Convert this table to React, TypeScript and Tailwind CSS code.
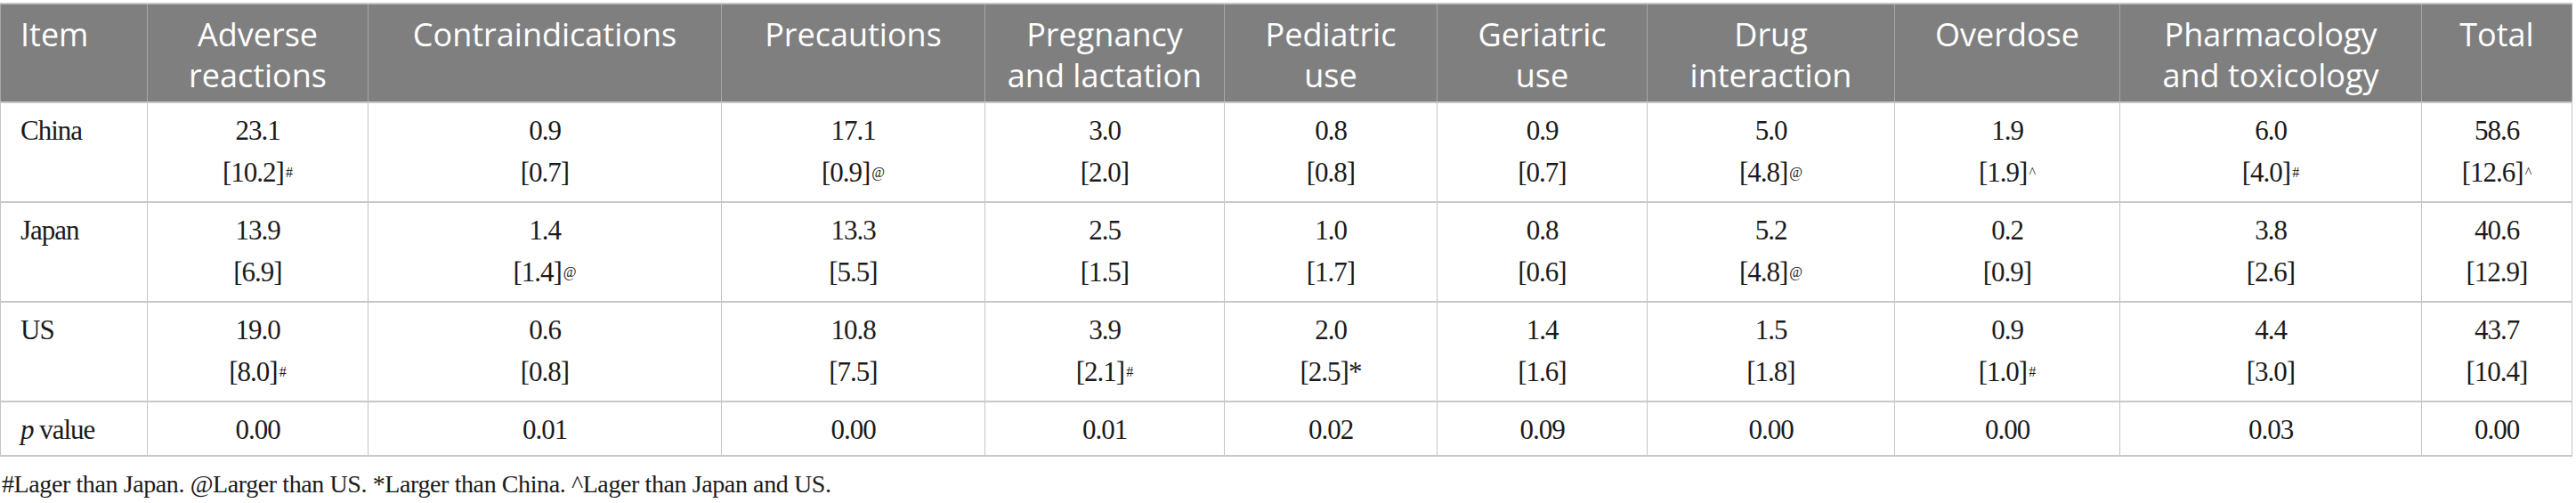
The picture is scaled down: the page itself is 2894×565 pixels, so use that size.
import React from "react";

const head: React.ReactNode[] = [
  <>Adverse<br />reactions</>,
  <>Contraindications</>,
  <>Precautions</>,
  <>Pregnancy<br />and lactation</>,
  <>Pediatric<br />use</>,
  <>Geriatric<br />use</>,
  <>Drug<br />interaction</>,
  <>Overdose</>,
  <>Pharmacology<br />and toxicology</>,
  <>Total</>,
];

const widths = [
  "w-[165px]",
  "w-[248px]",
  "w-[397px]",
  "w-[296px]",
  "w-[269px]",
  "w-[239px]",
  "w-[236px]",
  "w-[278px]",
  "w-[253px]",
  "w-[339px]",
  "w-[169px]",
];

type Row = { name: string; cells: { a: string; b: string; sup?: string; inl?: string }[] };

const rows: Row[] = [
  {
    name: "China",
    cells: [
      { a: "23.1", b: "[10.2]", sup: "#" },
      { a: "0.9", b: "[0.7]" },
      { a: "17.1", b: "[0.9]", sup: "@" },
      { a: "3.0", b: "[2.0]" },
      { a: "0.8", b: "[0.8]" },
      { a: "0.9", b: "[0.7]" },
      { a: "5.0", b: "[4.8]", sup: "@" },
      { a: "1.9", b: "[1.9]", sup: "^" },
      { a: "6.0", b: "[4.0]", sup: "#" },
      { a: "58.6", b: "[12.6]", sup: "^" },
    ],
  },
  {
    name: "Japan",
    cells: [
      { a: "13.9", b: "[6.9]" },
      { a: "1.4", b: "[1.4]", sup: "@" },
      { a: "13.3", b: "[5.5]" },
      { a: "2.5", b: "[1.5]" },
      { a: "1.0", b: "[1.7]" },
      { a: "0.8", b: "[0.6]" },
      { a: "5.2", b: "[4.8]", sup: "@" },
      { a: "0.2", b: "[0.9]" },
      { a: "3.8", b: "[2.6]" },
      { a: "40.6", b: "[12.9]" },
    ],
  },
  {
    name: "US",
    cells: [
      { a: "19.0", b: "[8.0]", sup: "#" },
      { a: "0.6", b: "[0.8]" },
      { a: "10.8", b: "[7.5]" },
      { a: "3.9", b: "[2.1]", sup: "#" },
      { a: "2.0", b: "[2.5]", inl: "*" },
      { a: "1.4", b: "[1.6]" },
      { a: "1.5", b: "[1.8]" },
      { a: "0.9", b: "[1.0]", sup: "#" },
      { a: "4.4", b: "[3.0]" },
      { a: "43.7", b: "[10.4]" },
    ],
  },
];

const pvals = ["0.00", "0.01", "0.00", "0.01", "0.02", "0.09", "0.00", "0.00", "0.03", "0.00"];

const thBase =
  "bg-[#7f7f7f] text-white font-['Open_Sans',sans-serif] font-normal text-[36px] leading-[46px] align-top pt-[11px] pb-[4px] border-x border-x-[#a6a6a6] border-t-2 border-t-[#c4c4c4] border-b border-b-[#c4c4c4] whitespace-nowrap";
const tdBase =
  "font-['Liberation_Serif',serif] text-[31px] tracking-[-1px] leading-[47px] text-[#1a1a1a] align-top pt-[7px] border-x border-x-[#c4c4c4] border-y-2 border-y-[#c8c8c8] whitespace-nowrap";

export default function App() {
  return (
    <div className="w-[2894px] h-[565px] bg-white overflow-hidden">
      <table className="mt-[3px] w-[2890px] table-fixed border-collapse">
        <colgroup>
          {widths.map((w, i) => (
            <col key={i} className={w} />
          ))}
        </colgroup>
        <thead>
          <tr className="h-[111px]">
            <th className={`${thBase} text-left pl-[22px]`}>Item</th>
            {head.map((h, i) => (
              <th key={i} className={`${thBase} text-center px-[6px]`}>
                {h}
              </th>
            ))}
          </tr>
        </thead>
        <tbody>
          {rows.map((r) => (
            <tr key={r.name} className="h-[112px]">
              <td className={`${tdBase} text-left pl-[22px]`}>{r.name}</td>
              {r.cells.map((c, i) => (
                <td key={i} className={`${tdBase} text-center`}>
                  <div>{c.a}</div>
                  <div>
                    {c.b}
                    {c.sup && (
                      <sup className="text-[16px] tracking-normal relative top-[-5px] align-baseline ml-[2px]">
                        {c.sup}
                      </sup>
                    )}
                    {c.inl}
                  </div>
                </td>
              ))}
            </tr>
          ))}
          <tr className="h-[61px]">
            <td className={`${tdBase} text-left pl-[22px]`}>
              <i>p</i> value
            </td>
            {pvals.map((p, i) => (
              <td key={i} className={`${tdBase} text-center`}>
                {p}
              </td>
            ))}
          </tr>
        </tbody>
      </table>
      <div className="mt-[14px] pl-[2px] font-['Liberation_Serif',serif] text-[28px] tracking-[-0.4px] leading-[34px] text-[#1a1a1a] whitespace-nowrap">
        #Lager than Japan. @Larger than US. *Larger than China. ^Lager than Japan and US.
      </div>
    </div>
  );
}
